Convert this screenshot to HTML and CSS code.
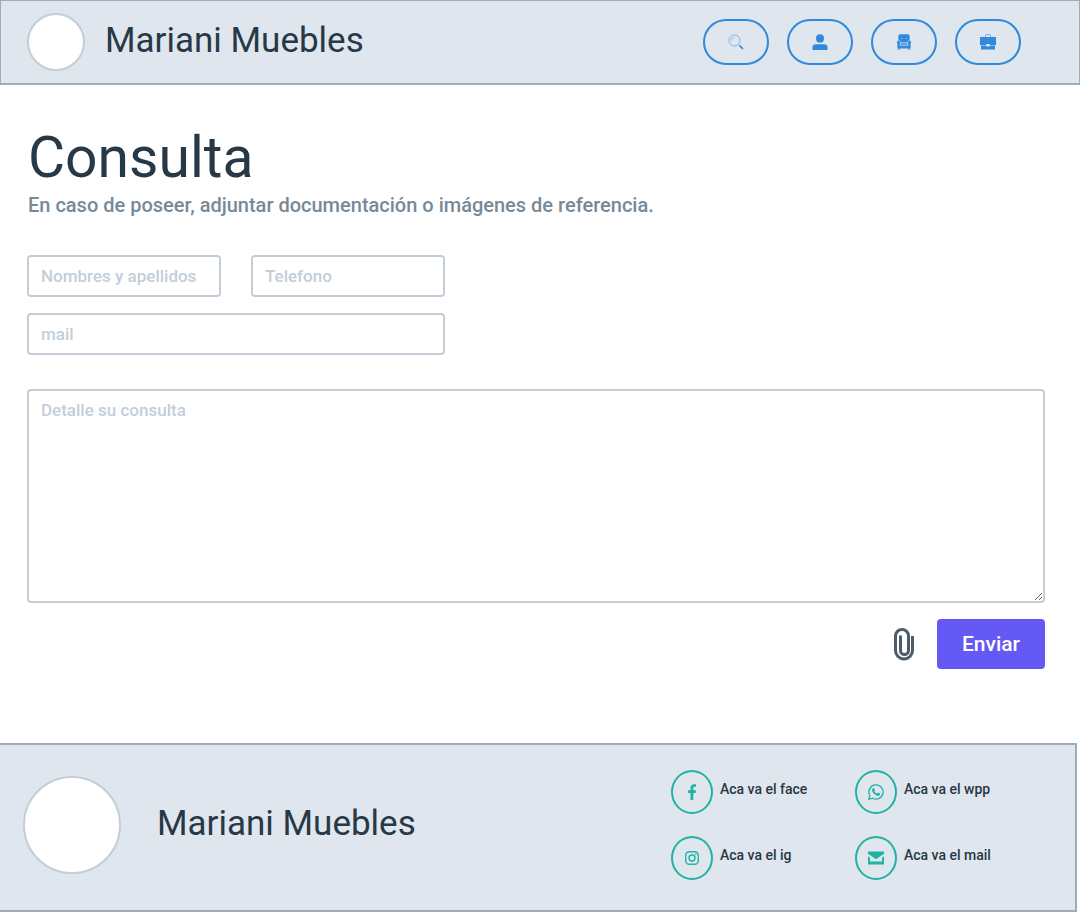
FILE: index.html
```html
<!DOCTYPE html>
<html lang="es">
<head>
<meta charset="utf-8">
<meta name="viewport" content="width=device-width, initial-scale=1">
<title>Mariani Muebles - Consulta</title>
<link rel="stylesheet" href="styles.css">
</head>
<body>
<header class="site-header">
  <div class="logo"></div>
  <span class="brand">Mariani Muebles</span>
  <nav class="nav">
    <button class="pill" type="button" aria-label="Buscar">
      <svg class="icon" viewBox="0 0 16 16"><g fill="none" stroke="currentColor"><circle cx="6.500" cy="6.500" r="5.500" stroke-width="1" opacity=".55"/><path d="M3.300 6.500a3.200 3.200 0 0 1 3.200-3.200" stroke-width=".8" opacity=".5"/><path d="M10.600 10.600l1.200 1.200" stroke-width=".8"/><path d="M11.600 11.600l3.400 3.400" stroke-width="1.600"/></g></svg>
    </button>
    <button class="pill" type="button" aria-label="Usuario">
      <svg class="icon" viewBox="0 0 16 16" fill="currentColor"><ellipse cx="8" cy="4.400" rx="4" ry="4.200"/><path d="M.5 16v-2.500Q.5 10.200 4 10.200h8q3.500 0 3.500 3.300V16z"/></svg>
    </button>
    <button class="pill" type="button" aria-label="Muebles">
      <svg class="icon" viewBox="0 0 16 16" fill="currentColor"><path fill-rule="evenodd" d="M4 .3h8q1.600 0 1.600 1.600v4q-1.900.4-1.900 2.400H4.300q0-2-1.900-2.400v-4Q2.400.3 4 .3zM5.200 4v.8H6V4zm4.800 0v.8h.8V4z"/><path d="M2.400 6.600q1.500 0 1.500 1.600v3.600h8.200V8.200q0-1.600 1.500-1.600T15 8.200q0 .9-.4 1.500v4.900h-.9V16h-1.200v-1.400h-9V16H2.300v-1.400h-.9V9.700Q1 9.100 1 8.200q0-1.600 1.400-1.600z"/><path d="M4.500 8.700h7v2.600h-7z" opacity=".75"/></svg>
    </button>
    <button class="pill" type="button" aria-label="Trabajos">
      <svg class="icon" viewBox="0 0 16 16"><path d="M5.500 3V1.500Q5.500.6 6.400.6h3.200q.9 0 .9.900V3" fill="none" stroke="currentColor" stroke-width="1" opacity=".6"/><path d="M0 3h16v7.900H9.700V10H6.300v.9H0zM1 11.500h5.300v1h3.400v-1H15v4H1z" fill="currentColor"/></svg>
    </button>
  </nav>
</header>

<main class="content">
  <h1 class="title">Consulta</h1>
  <p class="subtitle">En caso de poseer, adjuntar documentación o imágenes de referencia.</p>
  <form class="form">
    <div class="fields">
      <input class="field" type="text" placeholder="Nombres y apellidos" aria-label="Nombres y apellidos">
      <input class="field" type="tel" placeholder="Telefono" aria-label="Telefono">
      <input class="field field-wide" type="email" placeholder="mail" aria-label="mail">
    </div>
    <textarea class="field message" placeholder="Detalle su consulta" aria-label="Detalle su consulta"></textarea>
    <div class="actions">
      <button class="attach" type="button" aria-label="Adjuntar archivo">
        <svg class="clip" viewBox="0 0 22 34" fill="none" stroke="currentColor" stroke-width="3"><path d="M19.500 9v14.500a8.500 8.500 0 0 1-17 0V9a6.500 6.500 0 0 1 13 0v14.500a4 4 0 0 1-8 0V8.500"/></svg>
      </button>
      <button class="submit" type="submit">Enviar</button>
    </div>
  </form>
</main>

<footer class="site-footer">
  <div class="logo logo-large"></div>
  <span class="brand">Mariani Muebles</span>
  <div class="contacts">
    <a class="contact" href="#face">
      <span class="badge"><svg class="icon" viewBox="0 0 16 16" fill="currentColor"><path d="M6.500 16V9H4V6.300h2.500V4q0-3.800 3.600-3.800H12v2.600h-1.400q-1.300 0-1.300 1.400v2.100H12L11.600 9H9.300v7z"/></svg></span>
      <span class="label">Aca va el face</span>
    </a>
    <a class="contact" href="#wpp">
      <span class="badge"><svg class="icon" viewBox="0 0 16 16"><path d="M.8 15.200l1-3.800A7.100 7.100 0 1 1 4.600 14.200z" fill="none" stroke="currentColor" stroke-width="1.300"/><path d="M5.300 3.900h.8l.9 2-.8 1.200q1 1.900 2.800 2.600l.9-1.100 2.200 1q0 2.200-2.200 2.300-1.600 0-3.700-1.800T4 6.200q.1-1.500 1.300-2.300z" fill="currentColor"/></svg></span>
      <span class="label">Aca va el wpp</span>
    </a>
    <a class="contact" href="#ig">
      <span class="badge"><svg class="icon" viewBox="0 0 16 16" fill="none" stroke="currentColor" stroke-width="1.400"><rect x="1.700" y="1.700" width="12.600" height="12.600" rx="3.600"/><circle cx="8" cy="8" r="3"/><circle cx="11.700" cy="4.300" r=".8" fill="currentColor" stroke="none"/></svg></span>
      <span class="label">Aca va el ig</span>
    </a>
    <a class="contact" href="#mail">
      <span class="badge"><svg class="icon" viewBox="0 0 16 16" fill="currentColor"><path d="M0 1.500h16v2.300L8 9.300 0 3.800zM0 6.300l2 1.400v3.700h12V7.700l2-1.400v8.200H0z"/></svg></span>
      <span class="label">Aca va el mail</span>
    </a>
  </div>
</footer>
</body>
</html>
```
FILE: styles.css
```css
* {
  box-sizing: border-box;
}

body {
  display: flex;
  flex-direction: column;
  min-height: 100vh;
  margin: 0;
  background: #fff;
  color: #273846;
  font-family: Roboto, "Liberation Sans", sans-serif;
}

button,
input,
textarea {
  font-family: inherit;
}

.site-header {
  display: flex;
  align-items: center;
  gap: 20px;
  padding: 12px 58px 12px 26px;
  border: 1px solid #9eadba;
  border-bottom-width: 2px;
  background: #dfe6ee;
}

.logo {
  flex: none;
  width: 58px;
  height: 58px;
  border: 2px solid #c3ced9;
  border-radius: 50%;
  background: #fff;
}

.logo-large {
  width: 98px;
  height: 98px;
}

.brand {
  padding-bottom: 2px;
  font-size: 35px;
  line-height: 40px;
}

.nav {
  display: flex;
  gap: 18px;
  margin-left: auto;
}

.pill {
  display: flex;
  align-items: center;
  justify-content: center;
  width: 66px;
  height: 46px;
  padding: 0;
  border: 2px solid #2f8ade;
  border-radius: 23px;
  background: transparent;
  color: #2f8ade;
}

.icon {
  width: 16px;
  height: 16px;
}

.content {
  flex: 1;
  padding: 39px 35px 72px 28px;
}

.title {
  margin: 0;
  font-size: 57px;
  font-weight: 400;
  line-height: 68px;
}

.subtitle {
  margin: 0;
  padding-bottom: 36px;
  color: #788998;
  font-size: 20px;
  font-weight: 500;
  line-height: 27px;
}

.form {
  margin-left: -1px;
}

.fields {
  display: grid;
  grid-template-columns: 194px 194px;
  gap: 16px 30px;
  margin-bottom: 34px;
}

.field {
  width: 100%;
  height: 42px;
  padding: 0 12px;
  border: 2px solid #c3ced9;
  border-radius: 4px;
  background: #fff;
  color: #273846;
  font-size: 17px;
  font-weight: 500;
  line-height: 22px;
}

.field::placeholder {
  color: #c3ced9;
  opacity: 1;
}

.field-wide {
  grid-column: span 2;
}

.message {
  display: block;
  height: 214px;
  padding: 8px 12px;
}

.actions {
  display: flex;
  align-items: center;
  justify-content: flex-end;
  gap: 22px;
  margin-top: 16px;
}

.attach {
  display: flex;
  padding: 0;
  border: 0;
  background: transparent;
  color: #4c5c69;
}

.clip {
  width: 22px;
  height: 34px;
}

.submit {
  width: 108px;
  height: 50px;
  padding: 0;
  border: 0;
  border-radius: 4px;
  background: #6559f5;
  color: #fff;
  font-size: 21px;
  font-weight: 500;
}

.site-footer {
  display: flex;
  align-items: center;
  gap: 36px;
  margin-right: 3px;
  padding: 25px 36px 30px 23px;
  border: 2px solid #9eadba;
  border-left: 0;
  background: #dfe6ee;
}

.contacts {
  display: grid;
  grid-template-columns: 184px 184px;
  row-gap: 22px;
  margin-left: auto;
}

.contact {
  display: flex;
  align-items: center;
  gap: 7px;
  color: inherit;
  text-decoration: none;
}

.badge {
  display: flex;
  align-items: center;
  justify-content: center;
  width: 42px;
  height: 44px;
  border: 2px solid #20b2a3;
  border-radius: 50%;
  color: #20b2a3;
}

.label {
  padding-bottom: 6px;
  font-size: 14px;
  font-weight: 500;
  line-height: 20px;
}
```
